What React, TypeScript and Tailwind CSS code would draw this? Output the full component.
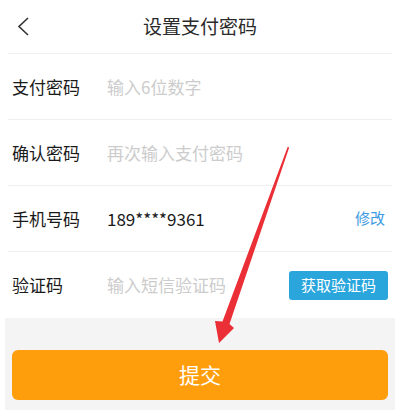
import React from 'react';

const FONT = { fontFamily: '"Noto Sans CJK SC", "Noto Sans", sans-serif' };

function Divider() {
    return <div className="mx-2 h-px bg-[#efefef]" />;
}

function Row({ label, tall, children }: { label: string; tall?: boolean; children: React.ReactNode }) {
    return (
        <div className={`flex ${tall ? 'h-[66px]' : 'h-[65px]'} items-center pl-3 pr-3`}>
            <span className="w-[95px] shrink-0 text-[17px] text-[#1a1a1a]">{label}</span>
            <div className="flex flex-1 items-center">{children}</div>
        </div>
    );
}

export default function App() {
    return (
        <div className="relative flex h-[414px] w-[400px] flex-col overflow-hidden bg-white" style={FONT}>
            <div className="grid h-[53px] grid-cols-[52px_1fr_52px] items-center">
                <svg width="40" height="40" viewBox="0 0 40 40" className="ml-1">
                    <path d="M24 11 L15 19.5 L24 28" fill="none" stroke="#333" strokeWidth="1.6" />
                </svg>
                <h1 className="text-center text-[19px] text-[#2a2a2a]">设置支付密码</h1>
                <div />
            </div>
            <Divider />
            <Row label="支付密码">
                <span className="text-[17px] text-[#cccccc]">输入6位数字</span>
            </Row>
            <Divider />
            <Row label="确认密码">
                <span className="text-[17px] text-[#cccccc]">再次输入支付密码</span>
            </Row>
            <Divider />
            <Row label="手机号码">
                <span className="flex-1 text-[17px] text-[#1a1a1a]">189****9361</span>
                <span className="pr-[3px] text-[15px] text-[#3d9be0]">修改</span>
            </Row>
            <Divider />
            <Row label="验证码" tall>
                <span className="flex-1 text-[17px] text-[#cccccc]">输入短信验证码</span>
                <button className="h-[29px] w-[99px] rounded-[3px] bg-[#2aa6dd] text-[15px] text-white">获取验证码</button>
            </Row>
            <div className="mx-[5px] h-[92px] bg-[#f4f4f4] px-[7px] pt-[32px]">
                <button className="h-[50px] w-full rounded-[6px] bg-[#ff9e0d] text-[21px] text-white">提交</button>
            </div>

            <svg className="pointer-events-none absolute left-0 top-0" width="400" height="414" viewBox="0 0 400 414">
                <polygon
                    points="287.6,147 289.2,147.6 229.5,324 234,328 219,343 215,321 222.5,321.5"
                    fill="#ea2f36"
                />
            </svg>
        </div>
    );
}
